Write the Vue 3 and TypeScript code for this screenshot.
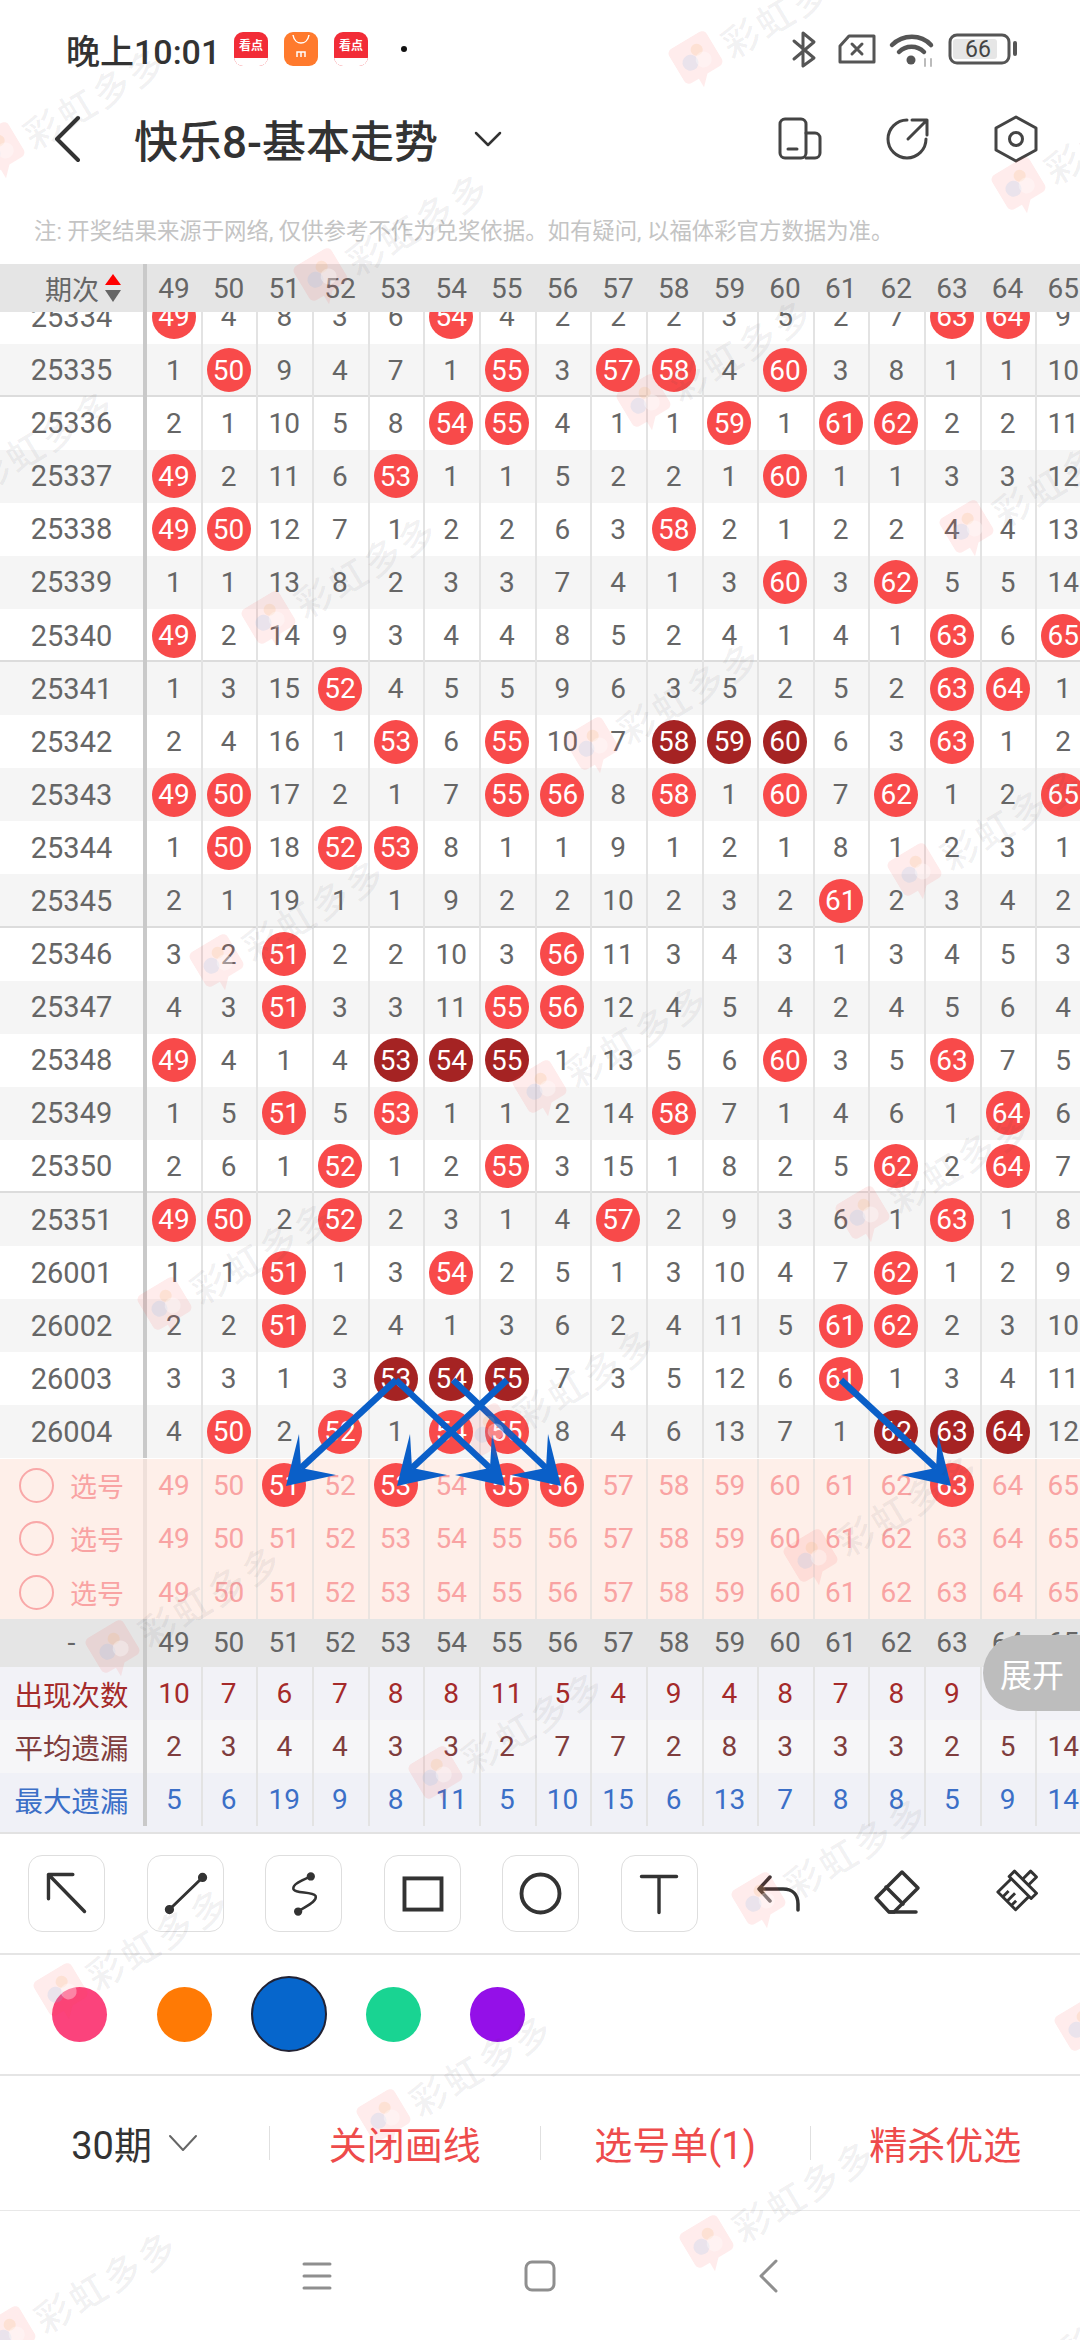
<script setup lang="ts">
type Cell = { text: string; kind: "" | "hit" | "dark" }

const numbers = Array.from({ length: 17 }, (_, i) => String(49 + i))

const rawRows = [
  "25334 49* 4 8 3 6 54* 4 2 2 2 3 5 2 7 63* 64* 9",
  "25335 1 50* 9 4 7 1 55* 3 57* 58* 4 60* 3 8 1 1 10",
  "25336 2 1 10 5 8 54* 55* 4 1 1 59* 1 61* 62* 2 2 11",
  "25337 49* 2 11 6 53* 1 1 5 2 2 1 60* 1 1 3 3 12",
  "25338 49* 50* 12 7 1 2 2 6 3 58* 2 1 2 2 4 4 13",
  "25339 1 1 13 8 2 3 3 7 4 1 3 60* 3 62* 5 5 14",
  "25340 49* 2 14 9 3 4 4 8 5 2 4 1 4 1 63* 6 65*",
  "25341 1 3 15 52* 4 5 5 9 6 3 5 2 5 2 63* 64* 1",
  "25342 2 4 16 1 53* 6 55* 10 7 58d 59d 60d 6 3 63* 1 2",
  "25343 49* 50* 17 2 1 7 55* 56* 8 58* 1 60* 7 62* 1 2 65*",
  "25344 1 50* 18 52* 53* 8 1 1 9 1 2 1 8 1 2 3 1",
  "25345 2 1 19 1 1 9 2 2 10 2 3 2 61* 2 3 4 2",
  "25346 3 2 51* 2 2 10 3 56* 11 3 4 3 1 3 4 5 3",
  "25347 4 3 51* 3 3 11 55* 56* 12 4 5 4 2 4 5 6 4",
  "25348 49* 4 1 4 53d 54d 55d 1 13 5 6 60* 3 5 63* 7 5",
  "25349 1 5 51* 5 53* 1 1 2 14 58* 7 1 4 6 1 64* 6",
  "25350 2 6 1 52* 1 2 55* 3 15 1 8 2 5 62* 2 64* 7",
  "25351 49* 50* 2 52* 2 3 1 4 57* 2 9 3 6 1 63* 1 8",
  "26001 1 1 51* 1 3 54* 2 5 1 3 10 4 7 62* 1 2 9",
  "26002 2 2 51* 2 4 1 3 6 2 4 11 5 61* 62* 2 3 10",
  "26003 3 3 1 3 53d 54d 55d 7 3 5 12 6 61* 1 3 4 11",
  "26004 4 50* 2 52* 1 54* 55* 8 4 6 13 7 1 62d 63d 64d 12",
]

function parseCell(v: string): Cell {
  if (v.endsWith("*")) return { text: v.slice(0, -1), kind: "hit" }
  if (v.endsWith("d")) return { text: v.slice(0, -1), kind: "dark" }
  return { text: v, kind: "" }
}

const rows = rawRows.map((line, i) => {
  const parts = line.split(" ")
  return {
    period: parts[0],
    cells: parts.slice(1).map(parseCell),
    shaded: i % 2 === 1,
    groupEnd: parts[0] !== "25334" && parts[0].startsWith("25") && Number(parts[0]) % 5 === 0,
  }
})

const picked = ["51", "53", "55", "56", "63"]
const pickRows = [0, 1, 2].map((r) =>
  numbers.map((n) => ({ text: n, on: r === 0 && picked.includes(n) }))
)

const stats = [
  { label: "出现次数", cls: "times", values: "10 7 6 7 8 8 11 5 4 9 4 8 7 8 9 6 3".split(" ") },
  { label: "平均遗漏", cls: "avg", values: "2 3 4 4 3 3 2 7 7 2 8 3 3 3 2 5 14".split(" ") },
  { label: "最大遗漏", cls: "max", values: "5 6 19 9 8 11 5 10 15 6 13 7 8 8 5 9 14".split(" ") },
]

const tools = ["arrow", "line", "curve", "rect", "circle", "text"]
const swatches = [
  { color: "#fb437c", active: false },
  { color: "#ff7a05", active: false },
  { color: "#0666cc", active: true },
  { color: "#19d492", active: false },
  { color: "#9410e8", active: false },
]

// drawn arrows on the chart: start and tip in page pixels
const arrows = [
  { x1: 396, y1: 1380, x2: 286, y2: 1486 },
  { x1: 396, y1: 1380, x2: 505, y2: 1486 },
  { x1: 453, y1: 1380, x2: 561, y2: 1486 },
  { x1: 507, y1: 1380, x2: 397, y2: 1486 },
  { x1: 841, y1: 1380, x2: 951, y2: 1486 },
].map((a) => {
  const d = a.x2 > a.x1 ? -1 : 1
  const { x2: x, y2: y } = a
  return {
    ...a,
    nx: x + d * 15,
    ny: y - 18,
    points: `${x},${y} ${x + d * 13},${y - 52} ${x + d * 15},${y - 18} ${x + d * 50},${y - 11}`,
  }
})

// watermark sits on a regular lattice
const marks: { x: number; y: number }[] = []
for (let n = -8; n <= 8; n++) {
  for (let m = -2; m <= 6; m++) {
    const x = 427 + n * 323 + m * 375 + 10
    const y = 1775 + n * 126 - m * 217
    if (x > -60 && x < 1140 && y > -20 && y < 2420) marks.push({ x, y })
  }
}
</script>

<template>
  <div class="page">
    <header class="status">
      <span class="time">晚上10:01</span>
      <div class="apps">
        <div class="app red"><b>看点</b><i></i></div>
        <div class="app orange">
          <svg width="34" height="34" viewBox="0 0 34 34" fill="none" stroke="#fff" stroke-width="1.5">
            <path d="M9 3c1 6 5 8 8 8s7-2 8-8" />
            <path d="M13 25v-5h8v5M17 20v5" />
          </svg>
        </div>
        <div class="app red"><b>看点</b><i></i></div>
        <span class="dot"></span>
      </div>
      <svg class="status-icons" width="230" height="40" viewBox="790 30 230 40" fill="none" stroke="#555" stroke-width="3" stroke-linejoin="round" stroke-linecap="round">
        <path d="M794 41l20 17-11 8V33l11 9-20 17" />
        <path d="M849 36h25v26h-34V46z" />
        <path d="M852 44l10 10M862 44l-10 10" />
        <path d="M892 45c11-11 29-11 39 0" stroke-width="4.5" />
        <path d="M899 52c7-7 18-7 25 0" stroke-width="4.5" />
        <circle cx="911" cy="60" r="4.5" fill="#555" stroke="none" />
        <path d="M925 59v7M931 59v7" stroke="#bbb" stroke-width="2" />
        <rect x="953" y="39" width="44" height="20" rx="3" fill="#e6e6e6" stroke="none" />
        <rect x="950" y="35" width="59" height="28" rx="7" />
        <path d="M1015 43v11" stroke-width="4" />
      </svg>
      <span class="battery">66</span>
    </header>

    <nav class="topbar">
      <svg class="back" width="26" height="48" viewBox="0 0 26 48" fill="none" stroke="#333" stroke-width="4" stroke-linecap="round" stroke-linejoin="round">
        <path d="M24 3L3 24l21 21" />
      </svg>
      <h1 class="title">快乐8-基本走势</h1>
      <svg class="caret" width="28" height="16" viewBox="0 0 28 16" fill="none" stroke="#333" stroke-width="2.5" stroke-linecap="round" stroke-linejoin="round">
        <path d="M2 2l12 12L26 2" />
      </svg>
      <div class="top-actions">
        <svg width="44" height="44" viewBox="0 0 44 44" fill="none" stroke="#444" stroke-width="3" stroke-linecap="round" stroke-linejoin="round">
          <rect x="2" y="2" width="26" height="39" rx="5" />
          <path d="M28 16h9a5 5 0 0 1 5 5v15a5 5 0 0 1-5 5h-9" />
          <path d="M10 32h9" />
        </svg>
        <svg width="44" height="44" viewBox="0 0 44 44" fill="none" stroke="#444" stroke-width="3" stroke-linecap="round" stroke-linejoin="round">
          <path d="M21 3A19 19 0 1 0 40 22" />
          <path d="M22 22L41 3M26 3h15v15" />
        </svg>
        <svg width="44" height="48" viewBox="0 0 44 48" fill="none" stroke="#444" stroke-width="3" stroke-linejoin="round">
          <path d="M22 2l20 11v22L22 46 2 35V13z" />
          <circle cx="22" cy="24" r="6.5" />
        </svg>
      </div>
    </nav>

    <p class="note">注: 开奖结果来源于网络, 仅供参考不作为兑奖依据。如有疑问, 以福体彩官方数据为准。</p>

    <section class="chart">
      <div class="grid head">
        <div class="side period-head">
          期次
          <span class="sorter"><i class="up"></i><i class="down"></i></span>
        </div>
        <div v-for="n in numbers" :key="n" class="num">{{ n }}</div>
      </div>

      <div class="scroller">
        <div class="scroll-inner">
          <div
            v-for="row in rows"
            :key="row.period"
            class="grid line"
            :class="{ shaded: row.shaded, 'group-end': row.groupEnd }"
          >
            <div class="side period">{{ row.period }}</div>
            <div v-for="(cell, i) in row.cells" :key="i" class="num ruled">
              <span v-if="cell.kind" class="ball" :class="cell.kind">{{ cell.text }}</span>
              <template v-else>{{ cell.text }}</template>
            </div>
          </div>
        </div>
      </div>

      <div v-for="(pick, r) in pickRows" :key="r" class="grid pick">
        <div class="side pick-side"><span class="ring"></span>选号</div>
        <div v-for="c in pick" :key="c.text" class="num ruled">
          <span v-if="c.on" class="ball hit">{{ c.text }}</span>
          <template v-else>{{ c.text }}</template>
        </div>
      </div>

      <div class="grid head foot">
        <div class="side">-</div>
        <div v-for="n in numbers" :key="n" class="num">{{ n }}</div>
      </div>

      <div v-for="s in stats" :key="s.label" class="grid stat" :class="s.cls">
        <div class="side">{{ s.label }}</div>
        <div v-for="(v, i) in s.values" :key="i" class="num ruled">{{ v }}</div>
      </div>

      <div class="expand">展开</div>
    </section>

    <section class="tools">
      <div v-for="t in tools" :key="t" class="tool boxed">
        <svg width="77" height="77" viewBox="0 0 77 77" fill="none" stroke="#333" stroke-width="3.5" stroke-linecap="round" stroke-linejoin="round">
          <path v-if="t === 'arrow'" d="M45 19H20v25M20 19l37 38" />
          <template v-if="t === 'line'">
            <path d="M22 55l34-33" stroke-width="3" />
            <circle cx="22" cy="55" r="3" fill="#333" />
            <circle cx="56" cy="22" r="3" fill="#333" />
          </template>
          <template v-if="t === 'curve'">
            <path d="M46 21C38 25 28 28 28 33c0 6 19 3 23 8 2 6-11 11-18 16" stroke-width="2.5" />
            <circle cx="46" cy="21" r="2.5" fill="#333" />
            <circle cx="33" cy="57" r="2.5" fill="#333" />
          </template>
          <rect v-if="t === 'rect'" x="20" y="23" width="38" height="32" stroke-linejoin="miter" stroke-width="4" />
          <circle v-if="t === 'circle'" cx="38.5" cy="38.5" r="19.5" stroke-width="4" />
          <path v-if="t === 'text'" d="M20 21h36M38 21v37" />
        </svg>
      </div>
      <div class="tool">
        <svg width="77" height="77" viewBox="0 0 77 77" fill="none" stroke="#333" stroke-width="3.5" stroke-linecap="round" stroke-linejoin="round">
          <path d="M31 22L20 34l11 12M20 34h24c10 0 15 6 15 15v6" />
        </svg>
      </div>
      <div class="tool">
        <svg width="77" height="77" viewBox="0 0 77 77" fill="none" stroke="#333" stroke-width="3.5" stroke-linecap="round" stroke-linejoin="round">
          <path d="M44 17l16 16-24 24h-5L18 43z" />
          <path d="M28 32l17 17M32 57h26" />
        </svg>
      </div>
      <div class="tool">
        <svg width="77" height="77" viewBox="0 0 77 77" fill="none" stroke="#333" stroke-width="3" stroke-linejoin="round">
          <g transform="rotate(45 38.5 38.5) translate(9 9) scale(.76)">
            <path d="M33 18V3h11v15" stroke-width="3.8" />
            <rect x="18" y="18" width="41" height="10" stroke-width="3.8" />
            <path d="M22 28v25h33V28M31 53V42M39 53V38M47 53V44" stroke-width="3.8" />
          </g>
        </svg>
      </div>
    </section>

    <section class="palette">
      <div v-for="s in swatches" :key="s.color" class="slot">
        <span class="swatch" :class="{ active: s.active }" :style="{ background: s.color }"></span>
      </div>
    </section>

    <section class="actions">
      <div class="action plain">
        30期
        <svg width="30" height="18" viewBox="0 0 30 18" fill="none" stroke="#666" stroke-width="2" stroke-linecap="round" stroke-linejoin="round">
          <path d="M2 2l13 14L28 2" />
        </svg>
      </div>
      <div class="action">关闭画线</div>
      <div class="action">选号单(1)</div>
      <div class="action">精杀优选</div>
    </section>

    <footer class="sysnav">
      <svg width="30" height="30" viewBox="0 0 30 30" stroke="#8f8f8f" stroke-width="3" stroke-linecap="round">
        <path d="M2 3h26M2 15h26M2 27h26" />
      </svg>
      <svg width="32" height="32" viewBox="0 0 32 32" fill="none" stroke="#8f8f8f" stroke-width="3">
        <rect x="2" y="2" width="28" height="28" rx="6" />
      </svg>
      <svg class="sys-back" width="20" height="34" viewBox="0 0 20 34" fill="none" stroke="#8f8f8f" stroke-width="3" stroke-linecap="round" stroke-linejoin="round">
        <path d="M17 2L2 17l15 15" />
      </svg>
    </footer>

    <svg class="drawing" width="1080" height="2340" viewBox="0 0 1080 2340">
      <g v-for="(a, i) in arrows" :key="i" fill="#0a5fc8">
        <line :x1="a.x1" :y1="a.y1" :x2="a.nx" :y2="a.ny" stroke="#0a5fc8" stroke-width="6.5" />
        <polygon :points="a.points" />
      </g>
    </svg>

    <div class="watermarks">
      <div v-for="(m, i) in marks" :key="i" class="mark" :style="{ left: m.x + 'px', top: m.y + 'px' }">
        <svg width="44" height="50" viewBox="0 0 44 50">
          <path d="M6 0h32a6 6 0 0 1 6 6v28a6 6 0 0 1-6 6H24l-10 10v-10H6a6 6 0 0 1-6-6V6a6 6 0 0 1 6-6z" fill="#f44" opacity=".1" />
          <circle cx="15" cy="22" r="8" fill="#7ab2ee" opacity=".16" />
          <circle cx="27" cy="14" r="6" fill="#f6b26b" opacity=".18" />
          <circle cx="28" cy="26" r="8" fill="#fff" opacity=".35" />
        </svg>
        <span>彩虹多多</span>
      </div>
    </div>
  </div>
</template>

<style>
html,
body {
  margin: 0;
  background: #fff;
}
</style>

<style scoped>
.page {
  position: relative;
  width: 1080px;
  height: 2340px;
  overflow: hidden;
  background: #fff;
  font-family: Roboto, "Noto Sans CJK SC", sans-serif;
  color: #666;
}

.status {
  position: relative;
  height: 98px;
  display: flex;
  align-items: center;
  padding-left: 66px;
  box-sizing: border-box;
}
.time {
  font-size: 34px;
  font-weight: 500;
  color: #333;
  width: 168px;
}
.apps {
  display: flex;
  align-items: center;
  gap: 16px;
}
.app {
  width: 34px;
  height: 34px;
  border-radius: 9px;
  overflow: hidden;
  position: relative;
  text-align: center;
}
.app.red {
  background: #f22c37;
}
.app.red b {
  display: block;
  font-size: 12px;
  line-height: 28px;
  color: #fff;
}
.app.red i {
  position: absolute;
  left: 0;
  right: 0;
  bottom: 0;
  height: 8px;
  background: #fff;
}
.app.orange {
  background: #ff7a2d;
}
.dot {
  width: 6px;
  height: 6px;
  border-radius: 50%;
  background: #111;
  margin-left: 17px;
}
.status-icons {
  margin-left: auto;
  margin-right: 60px;
  margin-top: 2px;
}
.battery {
  position: absolute;
  left: 963px;
  top: 36px;
  width: 30px;
  text-align: center;
  font-size: 23px;
  line-height: 28px;
  color: #444;
}

.topbar {
  height: 82px;
  display: flex;
  align-items: center;
  padding-left: 54px;
}
.title {
  margin: 0 0 0 54px;
  font-size: 44px;
  font-weight: 500;
  color: #333;
}
.caret {
  margin-left: 36px;
}
.top-actions {
  margin-left: auto;
  margin-right: 42px;
  display: flex;
  gap: 64px;
  align-items: center;
}

.note {
  margin: 0;
  height: 84px;
  padding: 39px 0 0 34px;
  box-sizing: border-box;
  font-size: 22.4px;
  line-height: 24px;
  color: #c4c4c4;
  white-space: nowrap;
}

.chart {
  position: relative;
  overflow: hidden;
  border-bottom: 2px solid #e2e2e2;
}
.grid {
  display: grid;
  grid-template-columns: 147px 53.8px repeat(16, 55.65px);
  align-items: stretch;
}
.side {
  box-shadow: inset -4px 0 0 #c9c9c9;
  padding-right: 4px;
  display: flex;
  align-items: center;
  justify-content: center;
  font-size: 28.5px;
  white-space: nowrap;
}
.num {
  display: flex;
  align-items: center;
  justify-content: center;
  font-size: 28px;
  white-space: nowrap;
}
.num.ruled + .num.ruled {
  box-shadow: inset 2px 0 0 #e3e3e3;
}

.head {
  height: 48px;
  background: #e5e5e5;
  position: relative;
  z-index: 1;
}
.period-head {
  font-size: 27px;
  padding-right: 0;
  justify-content: flex-start;
  padding-left: 45px;
}
.sorter {
  display: flex;
  flex-direction: column;
  gap: 5px;
  margin-left: 6px;
}
.sorter i {
  display: block;
  width: 0;
  height: 0;
  border-left: 8px solid transparent;
  border-right: 8px solid transparent;
}
.sorter .up {
  border-bottom: 11px solid #f00;
}
.sorter .down {
  border-top: 12px solid #666;
}

.scroller {
  height: 1146.6px;
  overflow: hidden;
}
.scroll-inner {
  margin-top: -21.6px;
}
.line {
  height: 53.1px;
  background: #fff;
}
.line.shaded {
  background: #f5f5f5;
}
.line.group-end {
  box-shadow: inset 0 -2px 0 #dcdcdc;
}
.period {
  font-size: 29px;
}
.ball {
  width: 44px;
  height: 44px;
  border-radius: 50%;
  display: flex;
  align-items: center;
  justify-content: center;
  color: #fff;
}
.ball.hit {
  background: #f84a4a;
}
.ball.dark {
  background: #a52323;
}

.pick {
  height: 53.4px;
  background: #feefe9;
  color: #f9a3a3;
}
.pick .side {
  box-shadow: inset -4px 0 0 #efe0da;
}
.pick .num.ruled + .num.ruled {
  box-shadow: inset 2px 0 0 #ebe4e0;
}
.pick-side {
  justify-content: flex-start;
  padding-left: 19px;
  gap: 16px;
  font-size: 27px;
}
.ring {
  width: 31px;
  height: 31px;
  border: 2px solid #f9a8a8;
  border-radius: 50%;
}
.foot {
  z-index: 0;
}
.stat {
  height: 53px;
}
.stat.times {
  background: #f2f2f7;
  color: #a52a2a;
}
.stat.avg {
  background: #f6f6f8;
  color: #7f3d3d;
}
.stat.max {
  background: #f0f1f7;
  color: #3b6fc7;
  height: 59px;
  padding-bottom: 6px;
  box-sizing: border-box;
}
.expand {
  position: absolute;
  right: 0;
  top: 1371px;
  width: 97px;
  height: 76px;
  border-radius: 38px 0 0 38px;
  background: #bdbdbd;
  color: #fff;
  font-size: 32px;
  display: flex;
  align-items: center;
  padding-left: 17px;
  box-sizing: border-box;
  z-index: 2;
}

.tools {
  height: 121px;
  padding-left: 7.5px;
  display: flex;
  align-items: center;
  border-bottom: 2px solid #e5e5e5;
  box-sizing: border-box;
}
.tool {
  width: 118.5px;
  display: flex;
  justify-content: center;
}
.tool svg {
  display: block;
}
.boxed svg {
  border: 1px solid #dedede;
  border-radius: 14px;
  box-sizing: border-box;
}

.palette {
  height: 121px;
  padding-left: 27.5px;
  display: flex;
  align-items: center;
  border-bottom: 2px solid #e5e5e5;
  box-sizing: border-box;
}
.slot {
  width: 104.5px;
  display: flex;
  justify-content: center;
}
.swatch {
  width: 55px;
  height: 55px;
  border-radius: 50%;
}
.swatch.active {
  width: 76px;
  height: 76px;
  border: 2px solid #223;
  box-sizing: border-box;
}

.actions {
  height: 135px;
  display: flex;
  align-items: center;
  border-bottom: 1px solid #e8e8e8;
  box-sizing: border-box;
}
.action {
  flex: 1;
  height: 34px;
  display: flex;
  align-items: center;
  justify-content: center;
  font-size: 38px;
  color: #ee4b4b;
  white-space: nowrap;
}
.action + .action {
  border-left: 1px solid #e0e0e0;
}
.action.plain {
  color: #333;
  gap: 16px;
}

.sysnav {
  height: 130px;
  position: relative;
  display: flex;
  align-items: center;
  padding-left: 302px;
  gap: 192px;
}
.sys-back {
  margin-left: 11px;
}

.drawing {
  position: absolute;
  left: 0;
  top: 0;
  z-index: 3;
  pointer-events: none;
}
.watermarks {
  position: absolute;
  inset: 0;
  z-index: 4;
  pointer-events: none;
}
.mark {
  position: absolute;
  display: flex;
  align-items: center;
  gap: 8px;
  transform: translate(-22px, -25px) rotate(-31deg);
  transform-origin: 22px 25px;
  white-space: nowrap;
}
.mark span {
  font-size: 37px;
  font-weight: 500;
  letter-spacing: 3px;
  color: rgba(60, 60, 70, 0.07);
}
</style>
